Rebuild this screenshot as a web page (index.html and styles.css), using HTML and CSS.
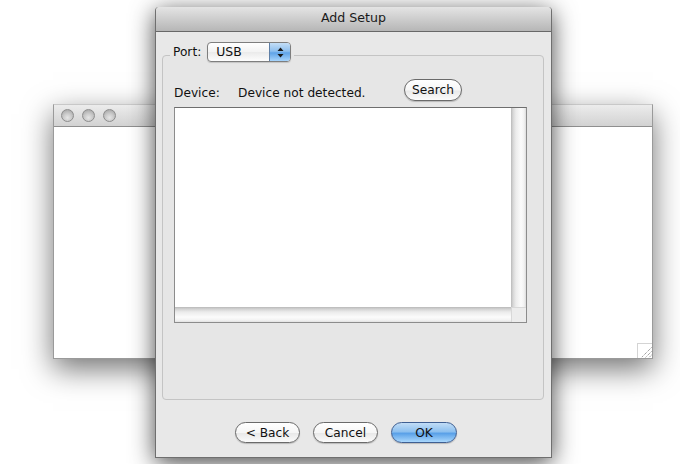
FILE: index.html
```html
<!DOCTYPE html>
<html>
<head>
<meta charset="utf-8">
<title>Add Setup</title>
<link rel="stylesheet" href="styles.css">
</head>
<body>
<div class="desktop">
  <div class="window">
    <div class="win-titlebar">
      <span class="light"></span><span class="light"></span><span class="light"></span>
    </div>
    <div class="win-body">
      <div class="grip">
        <svg width="14" height="14" viewBox="0 0 14 14">
          <path d="M13.5 3.5 L3.5 13.5 M13.5 7.5 L7.5 13.5 M13.5 11 L11 13.5" stroke="#7a7a7a" stroke-width="1" stroke-dasharray="1 1" fill="none"/>
        </svg>
      </div>
    </div>
  </div>

  <div class="sheet">
    <div class="sheet-title">Add Setup</div>
    <div class="sheet-body">
      <fieldset class="group">
        <legend class="group-legend">
          <span class="port">
            <span class="port-label">Port:</span>
            <span class="popup">
              <span class="popup-value">USB</span>
              <span class="popup-arrows">
                <svg width="7" height="11" viewBox="0 0 7 11">
                  <path d="M3.5 0.5 L6.5 4 L0.5 4 Z M0.5 7 L6.5 7 L3.5 10.5 Z" fill="#1a1a1a"/>
                </svg>
              </span>
            </span>
          </span>
        </legend>
        <div class="device-row">
          <span class="dev-label">Device:</span>
          <span class="dev-status">Device not detected.</span>
          <button class="btn search">Search</button>
        </div>
        <div class="list">
          <div class="list-main">
            <div class="list-content"></div>
            <div class="vscroll"></div>
          </div>
          <div class="list-bottom">
            <div class="hscroll"></div>
            <div class="corner"></div>
          </div>
        </div>
      </fieldset>
      <div class="actions">
        <button class="btn back">&lt; Back</button>
        <button class="btn cancel">Cancel</button>
        <button class="btn ok">OK</button>
      </div>
    </div>
  </div>
</div>
</body>
</html>
```

FILE: styles.css
```css
* { box-sizing: border-box; }
html, body { margin: 0; padding: 0; background: #ffffff; }
body {
  width: 680px;
  height: 464px;
  overflow: hidden;
  font-family: "DejaVu Sans", "Liberation Sans", sans-serif;
  font-size: 12.2px;
  color: #111;
}
.desktop { position: relative; width: 680px; height: 464px; }

/* background window */
.window {
  position: absolute;
  left: 53px;
  top: 104px;
  width: 600px;
  height: 255px;
  border: 1px solid #9a9a9a;
  border-top-color: #c8c8c8;
  background: #fff;
  box-shadow: 0 10px 28px rgba(0,0,0,0.55);
  display: flex;
  flex-direction: column;
}
.win-titlebar {
  height: 22px;
  background: linear-gradient(#ececec, #d2d2d2);
  border-bottom: 1px solid #8f8f8f;
  display: flex;
  align-items: center;
  gap: 8px;
  padding-left: 7px;
}
.light {
  width: 13px;
  height: 13px;
  border-radius: 50%;
  background: radial-gradient(circle at 50% 70%, #e6e6e6 0%, #c9c9c9 45%, #9e9e9e 100%);
  border: 1px solid #8d8d8d;
}
.win-body {
  flex: 1;
  display: flex;
  justify-content: flex-end;
  align-items: flex-end;
}
.grip {
  width: 15px;
  height: 15px;
  border-left: 1px solid #d4d4d4;
  border-top: 1px solid #d4d4d4;
  display: flex;
  align-items: flex-end;
  justify-content: flex-end;
}
.grip svg { display: block; }

/* dialog */
.sheet {
  position: absolute;
  left: 155px;
  top: 7px;
  width: 397px;
  height: 451px;
  background: #e8e8e8;
  border: 1px solid #6f6f6f;
  border-top: none;
  border-radius: 4px 4px 0 0;
  box-shadow: 0 5px 24px rgba(0,0,0,0.72);
  display: flex;
  flex-direction: column;
}
.sheet-title {
  height: 25px;
  background: linear-gradient(#e4e4e4, #b6b6b6);
  border-bottom: 1px solid #686868;
  border-radius: 4px 4px 0 0;
  text-align: center;
  font-size: 12.6px;
  line-height: 22px;
  color: #1a1a1a;
}
.sheet-body {
  flex: 1;
  display: flex;
  flex-direction: column;
}
.group {
  margin: 10px 7px 0 6px;
  padding: 0 16px 76px 11px;
  border: 1px solid #c4c4c4;
  border-radius: 4px;
  min-width: 0;
  background: #e6e6e6;
}
.group-legend {
  margin-left: -4px;
  padding: 0 3px 6px 3px;
}
.port {
  display: flex;
  align-items: center;
  height: 20px;
  gap: 6px;
}
.popup {
  display: flex;
  width: 84px;
  height: 20px;
  border: 1px solid #7e7e7e;
  border-radius: 4px;
  overflow: hidden;
  background: linear-gradient(#ffffff, #f3f3f3 50%, #eaeaea 50%, #fdfdfd);
  box-shadow: 0 1px 1px rgba(0,0,0,0.15);
}
.popup-value {
  flex: 1;
  padding-left: 8px;
  line-height: 18px;
  font-size: 12.4px;
}
.popup-arrows {
  width: 21px;
  border-left: 1px solid #5f7fa6;
  background: linear-gradient(#c4def6, #8ebfee 45%, #5fa3e8 55%, #a7d4fb);
  display: flex;
  align-items: center;
  justify-content: center;
}
.popup-arrows svg { display: block; }

.device-row {
  display: flex;
  align-items: center;
  margin-top: 11px;
  height: 22px;
}
.dev-label { width: 64px; padding-top: 6px; }
.dev-status { width: 166px; padding-top: 6px; }

.btn {
  font-family: "DejaVu Sans", "Liberation Sans", sans-serif;
  font-size: 12.2px;
  color: #111;
  height: 21px;
  padding: 0;
  border: 1px solid #6a6a6a;
  border-radius: 11px;
  background: linear-gradient(#ffffff, #f6f6f6 50%, #e9e9e9 55%, #fbfbfb);
  box-shadow: 0 1px 1px rgba(0,0,0,0.2);
  line-height: 18px;
}
.search { width: 58px; height: 22px; }

.list {
  margin-top: 6px;
  height: 216px;
  border: 1px solid #8c8c8c;
  border-top-color: #6e6e6e;
  background: #fff;
  display: flex;
  flex-direction: column;
}
.list-main { flex: 1; display: flex; }
.list-content { flex: 1; background: #fff; }
.vscroll {
  width: 15px;
  background: linear-gradient(to right, #b9b9b9 0, #d6d6d6 2px, #ececec 5px, #fbfbfb 10px, #f2f2f2 13px, #dcdcdc 15px);
}
.list-bottom { height: 15px; display: flex; }
.hscroll {
  flex: 1;
  background: linear-gradient(#b9b9b9 0, #d2d2d2 2px, #ebebeb 5px, #fbfbfb 10px, #f3f3f3 13px, #e2e2e2 15px);
}
.corner {
  width: 15px;
  background: #ececec;
  border-top: 1px solid #d8d8d8;
  border-left: 1px solid #d8d8d8;
}

.actions {
  display: flex;
  margin-top: 22px;
  padding-left: 79px;
  gap: 13px;
}
.back { width: 65px; }
.cancel { width: 65px; }
.ok {
  width: 66px;
  border-color: #3f5f92;
  background: linear-gradient(#c2ddf6, #8dc0ef 45%, #5aa1e8 55%, #a9d7fc);
}
```
